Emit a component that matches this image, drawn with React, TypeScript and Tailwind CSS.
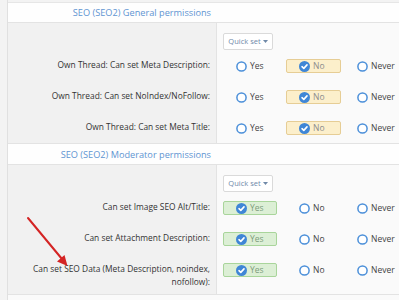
import React from 'react';

type Opt = { label: string; state: 'off' | 'yes' | 'no' };

const Circle = ({ on }: { on: boolean }) =>
  on ? (
    <svg width="11" height="11" viewBox="0 0 11 11" className="shrink-0">
      <circle cx="5.5" cy="5.5" r="5.5" fill="#3f86d6" />
      <path d="M3 5.7 L4.8 7.4 L8 3.9" stroke="#fff" strokeWidth="1.6" fill="none" strokeLinecap="round" strokeLinejoin="round" />
    </svg>
  ) : (
    <svg width="11" height="11" viewBox="0 0 11 11" className="shrink-0">
      <circle cx="5.5" cy="5.5" r="4.6" fill="#fff" stroke="#4b8fd9" strokeWidth="1.5" />
    </svg>
  );

const Option = ({ opt, className }: { opt: Opt; className: string }) => {
  const box =
    opt.state === 'yes'
      ? 'bg-[#dcefd5] border-[#a9d59b] text-[#7c9c7c]'
      : opt.state === 'no'
      ? 'bg-[#fcefcb] border-[#e6cd95] text-[#8d8d8d]'
      : 'border-transparent text-[#444]';
  return (
    <div className={`flex items-center h-[14px] border rounded-[2px] pl-[12px] gap-[3px] ${box} ${className}`}>
      <Circle on={opt.state !== 'off'} />
      <span className="text-[8.5px] leading-none">{opt.label}</span>
    </div>
  );
};

const Row = ({ label, opts, tall }: { label: React.ReactNode; opts: Opt[]; tall?: boolean }) => (
  <div className={`flex ${tall ? 'h-[40px]' : 'h-[31px]'}`}>
    <div className="w-[209px] shrink-0 bg-[#f1f1f1] border-r border-[#e3e3e3] text-right pr-[6px] pt-[8px] text-[8.4px] leading-[13px] text-[#333]">
      {label}
    </div>
    <div className="flex-1 flex items-start pt-[9px]">
      <Option opt={opts[0]} className="ml-[6px] w-[54px]" />
      <Option opt={opts[1]} className="ml-[9px] w-[55px]" />
      <Option opt={opts[2]} className="ml-[3px] w-[54px]" />
    </div>
  </div>
);

const QuickRow = () => (
  <div className="flex h-[27px]">
    <div className="w-[209px] shrink-0 bg-[#f1f1f1] border-r border-[#e3e3e3]" />
    <div className="flex-1 pt-[10px]">
      <div className="ml-[6px] w-[50px] h-[17px] bg-white border border-[#dadada] rounded-[2px] flex items-center justify-center gap-[2px] text-[7.5px] text-[#7089a8]">
        Quick set
        <svg width="5" height="3" viewBox="0 0 5 3"><path d="M0 0 H5 L2.5 3 Z" fill="#7089a8" /></svg>
      </div>
    </div>
  </div>
);

const Header = ({ title, className }: { title: string; className: string }) => (
  <div className={`bg-[#fefefe] border-b border-[#e3e3e3] ${className}`}>
    <div className="w-[209px] text-right pr-[6px] text-[9.2px] leading-none text-[#5f95d2]">{title}</div>
  </div>
);

const gen: Opt[] = [
  { label: 'Yes', state: 'off' },
  { label: 'No', state: 'no' },
  { label: 'Never', state: 'off' },
];
const mod: Opt[] = [
  { label: 'Yes', state: 'yes' },
  { label: 'No', state: 'off' },
  { label: 'Never', state: 'off' },
];

export default function App() {
  return (
    <div className="relative w-[399px] h-[300px] overflow-hidden bg-[#f3f3f3] pl-[7px] font-['Open_Sans',sans-serif]">
      <div className="border-l border-[#e0e0e0] bg-[#fafafa] h-full">
        <div className="h-[3px] bg-[#f3f3f3] border-b border-[#e6e6e6]" />
        <Header title="SEO (SEO2) General permissions" className="h-[20px] pt-[5px]" />
        <QuickRow />
        <Row label="Own Thread: Can set Meta Description:" opts={gen} />
        <Row label="Own Thread: Can set NoIndex/NoFollow:" opts={gen} />
        <Row label="Own Thread: Can set Meta Title:" opts={gen} />
        <div className="border-t border-[#e3e3e3]" />
        <Header title="SEO (SEO2) Moderator permissions" className="h-[21px] pt-[6px]" />
        <QuickRow />
        <Row label="Can set Image SEO Alt/Title:" opts={mod} />
        <Row label="Can set Attachment Description:" opts={mod} />
        <Row
          tall
          label={
            <>
              Can set SEO Data (Meta Description, noindex,
              <br />
              nofollow):
            </>
          }
          opts={mod}
        />
        <div className="border-t border-[#e3e3e3]" />
      </div>
      <svg className="absolute inset-0 pointer-events-none" width="399" height="300">
        <line x1="28" y1="218" x2="62" y2="259" stroke="#d42424" strokeWidth="2" strokeLinecap="round" />
        <path d="M67.5 266 L57 261.5 L64.5 255 Z" fill="#d42424" />
      </svg>
    </div>
  );
}
